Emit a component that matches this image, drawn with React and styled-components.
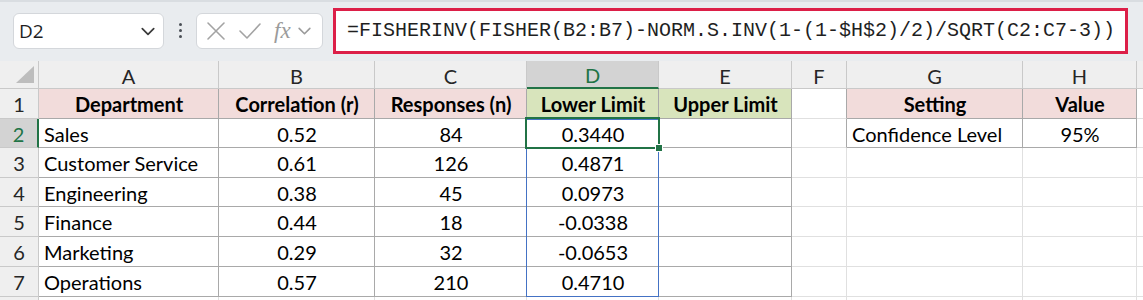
import React from 'react';
import styled, { createGlobalStyle } from 'styled-components';

const GlobalStyle = createGlobalStyle`
  html, body {
    margin: 0;
    padding: 0;
    background: #ffffff;
  }
  body {
    width: 1143px;
    overflow: hidden;
    font-family: Lato, "Liberation Sans", sans-serif;
  }
`;

const GREEN = '#217346';
const BLUE = '#4472c4';
const GRID = '#e0e0e0';
const BORDER = '#a9a9a9';
const PINK = '#f2dcdb';
const OLIVE = '#d8e4bc';

const COLUMNS = [
  { id: 'A', width: 180, align: 'left' },
  { id: 'B', width: 156, align: 'center' },
  { id: 'C', width: 152, align: 'center' },
  { id: 'D', width: 132, align: 'center' },
  { id: 'E', width: 133, align: 'center' },
  { id: 'F', width: 55, align: 'center' },
  { id: 'G', width: 176, align: 'left' },
  { id: 'H', width: 114, align: 'center' },
];

const ROW_HEIGHTS = [30, 29, 30, 29, 30, 30, 30, 30];

const DATA = [
  ['Department', 'Correlation (r)', 'Responses (n)', 'Lower Limit', 'Upper Limit', '', 'Setting', 'Value'],
  ['Sales', '0.52', '84', '0.3440', '', '', 'Confidence Level', '95%'],
  ['Customer Service', '0.61', '126', '0.4871', '', '', '', ''],
  ['Engineering', '0.38', '45', '0.0973', '', '', '', ''],
  ['Finance', '0.44', '18', '-0.0338', '', '', '', ''],
  ['Marketing', '0.29', '32', '-0.0653', '', '', '', ''],
  ['Operations', '0.57', '210', '0.4710', '', '', '', ''],
  ['', '', '', '', '', '', '', ''],
];

const FORMULA = '=FISHERINV(FISHER(B2:B7)-NORM.S.INV(1-(1-$H$2)/2)/SQRT(C2:C7-3))';

// r is the 1-based sheet row, c the 0-based column index
const inTable = (r, c) =>
  (r >= 1 && r <= 7 && c >= 0 && c <= 4) || (r >= 1 && r <= 2 && c >= 6 && c <= 7);

const headerFill = (r, c) => {
  if (r !== 1) return null;
  if (c <= 2 || c === 6 || c === 7) return PINK;
  if (c === 3 || c === 4) return OLIVE;
  return null;
};

const Toolbar = styled.div`
  height: 61px;
  box-sizing: border-box;
  background: #e9ecef;
  border-top: 2px solid #d9dde1;
  display: flex;
  align-items: center;
  padding: 0 0 0 13px;
`;

const NameBox = styled.div`
  width: 151px;
  height: 36px;
  box-sizing: border-box;
  background: #ffffff;
  border: 1px solid #d4d7db;
  border-radius: 6px;
  display: flex;
  align-items: center;
  justify-content: space-between;
  padding: 0 7px 0 5px;
  font-family: "Open Sans", "Noto Sans", sans-serif;
  font-size: 19px;
  color: #1f1f1f;
  margin-top: -2px;
`;

const Dots = styled.div`
  width: 32px;
  display: flex;
  flex-direction: column;
  align-items: center;
  gap: 3px;
  margin-top: -2px;

  span {
    width: 3px;
    height: 3px;
    border-radius: 50%;
    background: #4a4f55;
  }
`;

const FuncBox = styled.div`
  width: 127px;
  height: 36px;
  box-sizing: border-box;
  background: #ffffff;
  border: 1px solid #d4d7db;
  border-radius: 6px;
  display: flex;
  align-items: center;
  padding: 0 3px 0 8px;
  gap: 11px;
  margin-top: -2px;
`;

const Fx = styled.span`
  font-family: "Liberation Serif", "DejaVu Serif", serif;
  font-style: italic;
  font-size: 23px;
  color: #9b9b9b;
  display: flex;
  align-items: center;
  gap: 6px;
  margin-left: 1px;
`;

const FormulaBox = styled.div`
  margin-left: 10px;
  width: 795px;
  height: 46px;
  box-sizing: border-box;
  background: #ffffff;
  border: 3px solid #dc1f48;
  display: flex;
  align-items: center;
  padding-left: 11px;
  font-family: "Liberation Mono", "DejaVu Sans Mono", monospace;
  font-size: 20px;
  color: #1f1f1f;
  white-space: nowrap;
  margin-top: -2px;
`;

const Sheet = styled.div`
  display: grid;
  grid-template-columns: 39px ${COLUMNS.map((c) => `${c.width}px`).join(' ')} 1fr;
  grid-template-rows: 28px ${ROW_HEIGHTS.map((h) => `${h}px`).join(' ')};
`;

const Corner = styled.div`
  grid-row: 1;
  grid-column: 1;
  background: #efefef;
  border-right: 1px solid #c9c9c9;
  border-bottom: 1px solid #c9c9c9;
  display: flex;
  align-items: flex-end;
  justify-content: flex-end;
  padding: 0 4px 5px 0;
  box-sizing: border-box;
`;

const ColHeader = styled.div`
  grid-row: 1;
  grid-column: ${(p) => p.$col};
  box-sizing: border-box;
  background: ${(p) => (p.$active ? '#d3d3d3' : '#efefef')};
  color: ${(p) => (p.$active ? GREEN : '#262626')};
  border-right: 1px solid #c9c9c9;
  border-bottom: ${(p) => (p.$active ? `2px solid ${GREEN}` : '1px solid #c9c9c9')};
  display: flex;
  align-items: center;
  justify-content: center;
  font-size: 20px;
  padding-top: 2px;
`;

const RowHeader = styled.div`
  grid-column: 1;
  grid-row: ${(p) => p.$row};
  box-sizing: border-box;
  background: ${(p) => (p.$active ? '#d3d3d3' : '#efefef')};
  color: ${(p) => (p.$active ? GREEN : '#262626')};
  border-right: ${(p) => (p.$active ? `2px solid ${GREEN}` : '1px solid #c9c9c9')};
  border-bottom: 1px solid #c9c9c9;
  display: flex;
  align-items: center;
  justify-content: center;
  font-size: 20px;
  padding-top: 1px;
`;

const Cell = styled.div`
  grid-row: ${(p) => p.$row};
  grid-column: ${(p) => p.$col};
  box-sizing: border-box;
  background: ${(p) => p.$fill || '#ffffff'};
  border-right: 1px solid ${(p) => (p.$darkRight ? BORDER : GRID)};
  border-bottom: 1px solid ${(p) => (p.$darkBottom ? BORDER : GRID)};
  display: flex;
  align-items: center;
  justify-content: ${(p) => (p.$align === 'left' ? 'flex-start' : 'center')};
  padding: 1px 4px 0 5px;
  font-size: 20px;
  font-weight: ${(p) => (p.$bold ? 700 : 400)};
  color: #000000;
  white-space: nowrap;
  overflow: hidden;
`;

const RangeOutline = styled.div`
  grid-row: 3 / 9;
  grid-column: 5;
  margin-left: -1px;
  border: 1px solid ${BLUE};
  pointer-events: none;
  z-index: 1;
`;

const ActiveCell = styled.div`
  grid-row: 3;
  grid-column: 5;
  margin: -2px -1px -1px -2px;
  border: 2px solid ${GREEN};
  pointer-events: none;
  position: relative;
  z-index: 2;

  &::after {
    content: '';
    position: absolute;
    right: -5px;
    bottom: -5px;
    width: 6px;
    height: 6px;
    background: ${GREEN};
    border: 1px solid #ffffff;
  }
`;

const Chevron = ({ color = '#333', size = 14 }) => (
  <svg width={size} height={size} viewBox="0 0 14 14" fill="none">
    <path d="M2 5 L7 10 L12 5" stroke={color} strokeWidth="1.5" strokeLinecap="round" strokeLinejoin="round" />
  </svg>
);

const CrossIcon = () => (
  <svg width="22" height="22" viewBox="0 0 22 22" fill="none">
    <path d="M3 3 L19 19 M19 3 L3 19" stroke="#a3a3a3" strokeWidth="1.6" strokeLinecap="round" />
  </svg>
);

const CheckIcon = () => (
  <svg width="24" height="22" viewBox="0 0 24 22" fill="none">
    <path d="M2 11 L9 18 L22 4" stroke="#a3a3a3" strokeWidth="1.6" strokeLinecap="round" strokeLinejoin="round" />
  </svg>
);

const CornerTriangle = () => (
  <svg width="18" height="17" viewBox="0 0 18 17">
    <polygon points="18,0 18,17 0,17" fill="#bdbdbd" />
  </svg>
);

const App = () => {
  return (
    <>
      <GlobalStyle />
      <Toolbar>
        <NameBox>
          <span>D2</span>
          <Chevron color="#3a3a3a" size={16} />
        </NameBox>
        <Dots>
          <span />
          <span />
          <span />
        </Dots>
        <FuncBox>
          <CrossIcon />
          <CheckIcon />
          <Fx>
            fx
            <Chevron color="#9b9b9b" size={15} />
          </Fx>
        </FuncBox>
        <FormulaBox>{FORMULA}</FormulaBox>
      </Toolbar>

      <Sheet>
        <Corner>
          <CornerTriangle />
        </Corner>
        {COLUMNS.map((col, i) => (
          <ColHeader key={col.id} $col={i + 2} $active={col.id === 'D'}>
            {col.id}
          </ColHeader>
        ))}
        <ColHeader $col={COLUMNS.length + 2} />

        {DATA.map((row, ri) => {
          const r = ri + 1;
          const isHeading = r === 1;
          return (
            <React.Fragment key={r}>
              <RowHeader $row={r + 1} $active={r === 2}>
                {r <= 7 ? r : ''}
              </RowHeader>
              {row.map((value, c) => (
                <Cell
                  key={c}
                  $row={r + 1}
                  $col={c + 2}
                  $align={isHeading ? 'center' : COLUMNS[c].align}
                  $bold={isHeading && inTable(r, c)}
                  $fill={headerFill(r, c)}
                  $darkRight={inTable(r, c) || inTable(r, c + 1)}
                  $darkBottom={inTable(r, c) || inTable(r + 1, c)}
                >
                  {value}
                </Cell>
              ))}
              <Cell $row={r + 1} $col={COLUMNS.length + 2} />
            </React.Fragment>
          );
        })}

        <RangeOutline />
        <ActiveCell />
      </Sheet>
    </>
  );
};

export default App;
